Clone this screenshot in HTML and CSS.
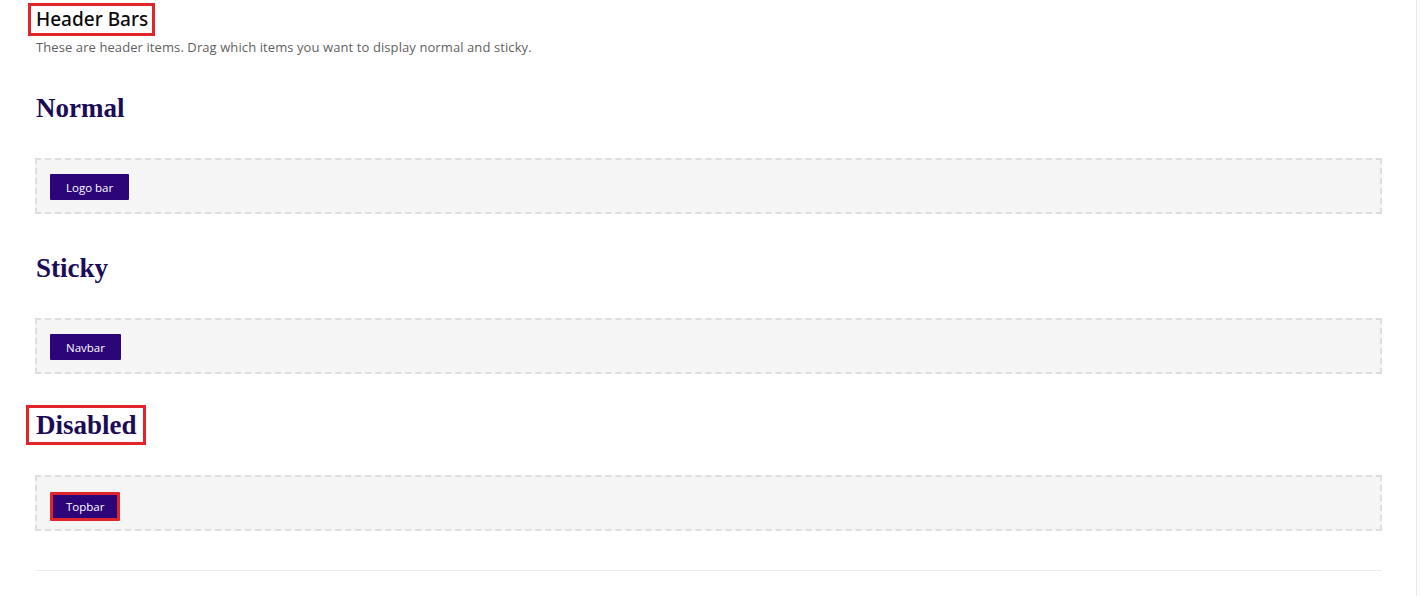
FILE: index.html
```html
<!DOCTYPE html>
<html>
<head>
<meta charset="utf-8">
<link rel="stylesheet" href="styles.css">
</head>
<body>
<div class="page">
  <div class="content">
    <div class="intro">
      <h1 class="title"><span class="mark mark-title">Header Bars</span></h1>
      <p class="desc">These are header items. Drag which items you want to display normal and sticky.</p>
    </div>

    <section class="group">
      <h2 class="group-title"><span class="plain">Normal</span></h2>
      <div class="dropzone">
        <span class="chip">Logo bar</span>
      </div>
    </section>

    <section class="group">
      <h2 class="group-title"><span class="plain">Sticky</span></h2>
      <div class="dropzone">
        <span class="chip">Navbar</span>
      </div>
    </section>

    <section class="group">
      <h2 class="group-title"><span class="mark mark-heading">Disabled</span></h2>
      <div class="dropzone">
        <span class="chip chip-marked">Topbar</span>
      </div>
    </section>

    <hr class="rule">
  </div>
</div>
</body>
</html>
```

FILE: styles.css
```css
html, body {
  margin: 0;
  padding: 0;
}
body {
  background: #fbfbfb;
  font-family: "Open Sans", "Noto Sans", sans-serif;
}
.page {
  width: 1417px;
  height: 596px;
  background: #ffffff;
  border-right: 1px solid #e8e8e8;
  box-sizing: border-box;
  overflow: hidden;
}
.content {
  width: 1347px;
  margin-left: 35px;
  padding-top: 3px;
}
.intro {
  display: flex;
  flex-direction: column;
  align-items: flex-start;
}
.title {
  margin: 0 0 0 -7px;
  font-family: "Noto Sans", "Open Sans", sans-serif;
  font-weight: 500;
  font-size: 19px;
  line-height: 27px;
  color: #0a0a0a;
}
.mark {
  display: inline-block;
  border: 3px solid #e0252d;
}
.mark-title {
  padding: 0 4px 0 5px;
}
.desc {
  margin: 2px 0 0 1px;
  font-size: 13px;
  line-height: 18px;
  letter-spacing: 0.09px;
  color: #5f5f5f;
}
.group {
  display: flex;
  flex-direction: column;
}
.group-title {
  margin: 32px 0 0 0;
  font-family: "Liberation Serif", "DejaVu Serif", serif;
  font-weight: 700;
  font-size: 27px;
  line-height: 34px;
  color: #1c0b56;
}
.group + .group .group-title {
  margin-top: 34px;
}
.plain {
  display: inline-block;
  padding: 3px 0 3px 1px;
}
.mark-heading {
  margin-left: -9px;
  padding: 0 6px 0 7px;
}
.group:last-of-type .group-title {
  margin-top: 31px;
}
.dropzone {
  margin-top: 30px;
  height: 56px;
  box-sizing: border-box;
  border: 2px dashed #dedede;
  background: #f5f5f5;
  padding: 14px 13px 0 13px;
  display: flex;
  align-items: flex-start;
}
.chip {
  display: inline-flex;
  align-items: center;
  height: 26px;
  padding: 0 16px;
  box-sizing: border-box;
  background: #2c0579;
  color: #ffffff;
  font-family: "Open Sans", "Noto Sans", sans-serif;
  font-size: 11.5px;
  border-radius: 1px;
}
.chip-marked {
  height: 29px;
  margin-top: 1px;
  border: 3px solid #e0252d;
  padding: 0 13px;
}
.rule {
  margin: 39px 0 0 0;
  border: 0;
  border-top: 1px solid #ececec;
  height: 0;
}
```
